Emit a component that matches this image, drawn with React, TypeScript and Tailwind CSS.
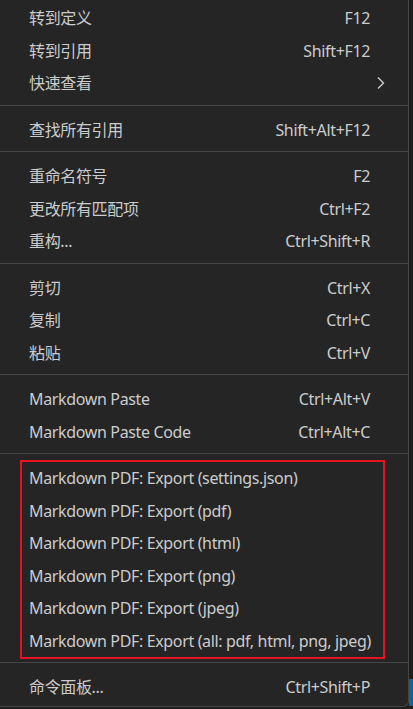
import React from "react";

type Item = { label: string; shortcut?: string; submenu?: boolean };

const font = {
  fontFamily: '"Noto Sans", "Noto Sans CJK SC", sans-serif',
};

function Row({ item }: { item: Item }) {
  return (
    <div className="flex h-[32.5px] items-center justify-between pl-[29px] pr-[38px] text-[16px] tracking-[-0.35px] text-[#cccccc]">
      <span className="whitespace-nowrap leading-none">{item.label}</span>
      {item.shortcut && <span className="whitespace-nowrap leading-none">{item.shortcut}</span>}
      {item.submenu && (
        <svg className="-mr-[16px]" width="10" height="14" viewBox="0 0 10 14" fill="none">
          <path d="M2 1.5 L7.5 7 L2 12.5" stroke="#cccccc" strokeWidth="1.4" />
        </svg>
      )}
    </div>
  );
}

function Sep() {
  return <div className="mt-[5.5px] mb-[7.5px] h-px bg-[#454545]" />;
}

export default function App() {
  const g1: Item[] = [
    { label: "转到定义", shortcut: "F12" },
    { label: "转到引用", shortcut: "Shift+F12" },
    { label: "快速查看", submenu: true },
  ];
  const g2: Item[] = [{ label: "查找所有引用", shortcut: "Shift+Alt+F12" }];
  const g3: Item[] = [
    { label: "重命名符号", shortcut: "F2" },
    { label: "更改所有匹配项", shortcut: "Ctrl+F2" },
    { label: "重构...", shortcut: "Ctrl+Shift+R" },
  ];
  const g4: Item[] = [
    { label: "剪切", shortcut: "Ctrl+X" },
    { label: "复制", shortcut: "Ctrl+C" },
    { label: "粘贴", shortcut: "Ctrl+V" },
  ];
  const g5: Item[] = [
    { label: "Markdown Paste", shortcut: "Ctrl+Alt+V" },
    { label: "Markdown Paste Code", shortcut: "Ctrl+Alt+C" },
  ];
  const g6: Item[] = [
    { label: "Markdown PDF: Export (settings.json)" },
    { label: "Markdown PDF: Export (pdf)" },
    { label: "Markdown PDF: Export (html)" },
    { label: "Markdown PDF: Export (png)" },
    { label: "Markdown PDF: Export (jpeg)" },
    { label: "Markdown PDF: Export (all: pdf, html, png, jpeg)" },
  ];
  const g7: Item[] = [{ label: "命令面板...", shortcut: "Ctrl+Shift+P" }];

  return (
    <div className="flex h-[709px] w-[413px] overflow-hidden bg-[#1e1e1e]" style={font}>
      <div className="flex h-[707px] w-[409px] flex-col rounded-br-[6px] border-r border-b border-[#454545] bg-[#252526] pt-[1.75px]">
        {g1.map((i) => <Row key={i.label} item={i} />)}
        <Sep />
        {g2.map((i) => <Row key={i.label} item={i} />)}
        <Sep />
        {g3.map((i) => <Row key={i.label} item={i} />)}
        <Sep />
        {g4.map((i) => <Row key={i.label} item={i} />)}
        <Sep />
        {g5.map((i) => <Row key={i.label} item={i} />)}
        <Sep />
        <div className="relative">
          {g6.map((i) => <Row key={i.label} item={i} />)}
          <div className="pointer-events-none absolute top-[-2px] bottom-[-2px] left-[20px] right-[23px] border-2 border-[#e81123]" />
        </div>
        <Sep />
        {g7.map((i) => <Row key={i.label} item={i} />)}
      </div>
      <div className="flex flex-1 flex-col">
        <div className="flex-1 bg-[#1e1e1e]" />
        <div className="h-[27px] bg-[#0e639c]" />
        <div className="h-[3px] bg-[#1e1e1e]" />
      </div>
    </div>
  );
}
